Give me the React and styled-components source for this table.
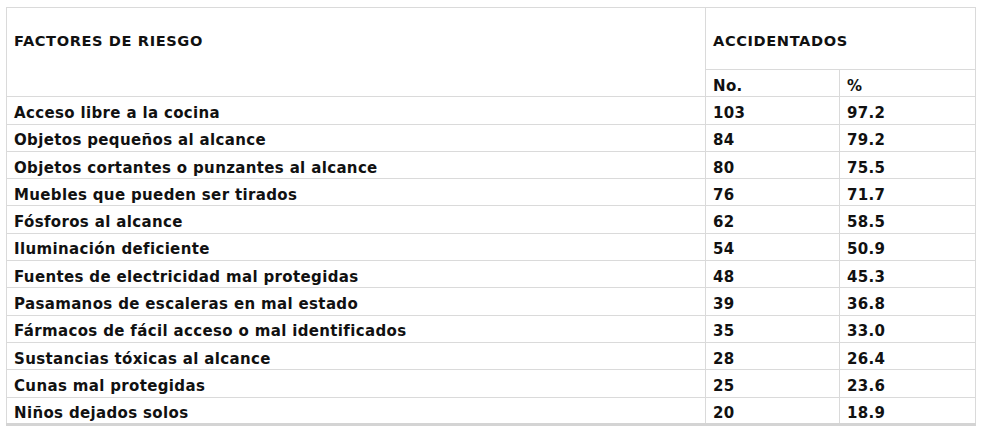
import React from 'react';
import styled, { createGlobalStyle } from 'styled-components';

const GlobalStyle = createGlobalStyle`
  html, body {
    margin: 0;
    padding: 0;
    background: #ffffff;
  }
`;

const rows = [
  ['Acceso libre a la cocina', '103', '97.2'],
  ['Objetos pequeños al alcance', '84', '79.2'],
  ['Objetos cortantes o punzantes al alcance', '80', '75.5'],
  ['Muebles que pueden ser tirados', '76', '71.7'],
  ['Fósforos al alcance', '62', '58.5'],
  ['Iluminación deficiente', '54', '50.9'],
  ['Fuentes de electricidad mal protegidas', '48', '45.3'],
  ['Pasamanos de escaleras en mal estado', '39', '36.8'],
  ['Fármacos de fácil acceso o mal identificados', '35', '33.0'],
  ['Sustancias tóxicas al alcance', '28', '26.4'],
  ['Cunas mal protegidas', '25', '23.6'],
  ['Niños dejados solos', '20', '18.9'],
];

const Page = styled.div`
  padding: 7px 0 0 6px;
  font-family: "DejaVu Sans", sans-serif;
  font-weight: bold;
  letter-spacing: 0.35px;
  color: #111;
`;

const Table = styled.table`
  width: 970px;
  border-collapse: collapse;
  border-bottom: 3px solid #d4d4d4;
`;

const HeadCell = styled.td`
  border: 1px solid #dadada;
  padding: 0 7px;
  height: ${(p) => p.$h}px;
  vertical-align: ${(p) => (p.$top ? 'top' : 'middle')};
  padding-top: ${(p) => (p.$top ? '24px' : '4px')};
  font-size: 14.6px;
  letter-spacing: 0.6px;
  box-sizing: border-box;
`;

const Cell = styled.td`
  border: 1px solid #dadada;
  padding: 5px 7px 0;
  height: 27.3px;
  font-size: 15px;
  width: ${(p) => p.$w || 'auto'};
  box-sizing: border-box;
`;

export default function App() {
  return (
    <Page>
      <GlobalStyle />
      <Table>
        <tbody>
          <tr>
            <HeadCell rowSpan={2} $top $h={62}>FACTORES DE RIESGO</HeadCell>
            <HeadCell colSpan={2} $h={62}>ACCIDENTADOS</HeadCell>
          </tr>
          <tr>
            <Cell>No.</Cell>
            <Cell>%</Cell>
          </tr>
          {rows.map(([label, no, pct]) => (
            <tr key={label}>
              <Cell $w="699px">{label}</Cell>
              <Cell $w="134px">{no}</Cell>
              <Cell>{pct}</Cell>
            </tr>
          ))}
        </tbody>
      </Table>
    </Page>
  );
}
